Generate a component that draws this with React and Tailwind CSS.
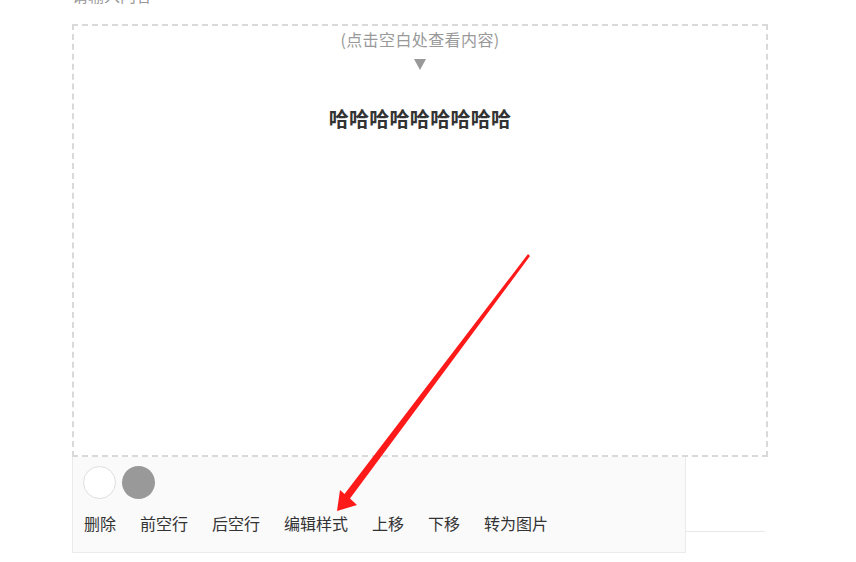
import React from "react";

export default function App() {
  const items = ["删除", "前空行", "后空行", "编辑样式", "上移", "下移", "转为图片"];
  return (
    <div
      className="relative w-[856px] h-[562px] overflow-hidden bg-white"
      style={{ fontFamily: '"Noto Sans CJK SC", "Noto Sans", sans-serif' }}
    >
      <div className="pl-[72px]">
        <div className="mt-[-17px] h-[24px] text-[16px] leading-[24px] text-[#999]">请输入内容</div>
        <div className="mt-[17px] w-[696px] h-[433px] border-2 border-dashed border-[#d9d9d9] flex flex-col items-center">
          <div className="mt-[2px] text-[16px] leading-[22px] text-[#999] tracking-[0.4px]">(点击空白处查看内容)</div>
          <svg className="mt-[9px]" width="12" height="11" viewBox="0 0 12 11">
            <polygon points="0,0 12,0 6,11" fill="#999" />
          </svg>
          <div className="mt-[35px] text-[20px] leading-[28px] font-bold text-[#333] tracking-[0.3px]">哈哈哈哈哈哈哈哈哈</div>
        </div>
        <div className="flex items-start">
          <div className="w-[614px] h-[96px] bg-[#fafafa] border-x border-b border-[#ebebeb] pl-[10px] pt-[9px]">
            <div className="flex gap-[6px]">
              <div className="w-[33px] h-[33px] rounded-full bg-white border border-[#dedede]" />
              <div className="w-[33px] h-[33px] rounded-full bg-[#999]" />
            </div>
            <div className="mt-[12px] ml-[1px] flex gap-[24px] text-[16px] leading-[24px] text-[#333]">
              {items.map((t) => (
                <span key={t}>{t}</span>
              ))}
            </div>
          </div>
          <div className="w-[79px] h-[75px] border-b border-[#e8e8e8]" />
        </div>
        <div className="mt-[5px] flex text-[16px] leading-[24px]">
          <span className="text-[#333] ml-[2px]">标签</span>
          <span className="text-[#e33] ml-[24px]">必填</span>
        </div>
      </div>
      <svg className="absolute left-0 top-0 pointer-events-none" width="856" height="562" viewBox="0 0 856 562">
        <polygon
          points="337,511 340,490 344.5,494 528,254 530,256 350,498.5 357,505"
          fill="#ff1a1a"
        />
      </svg>
    </div>
  );
}
